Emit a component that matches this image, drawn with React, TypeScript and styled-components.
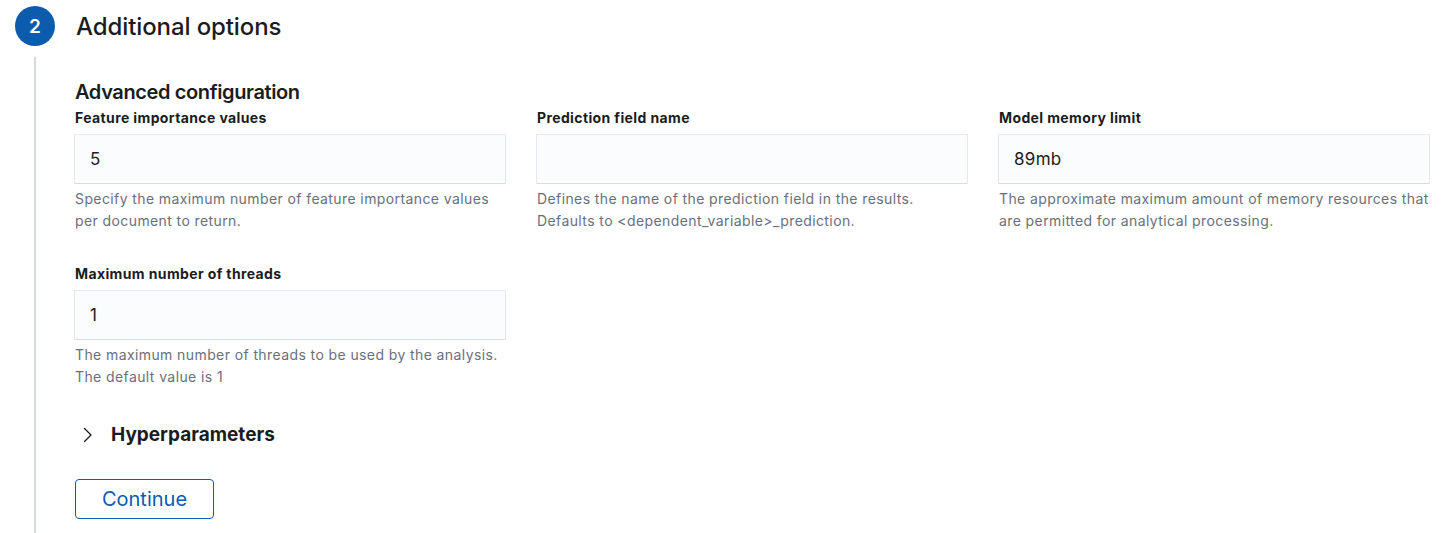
import React from "react";
import styled, { createGlobalStyle } from "styled-components";

const Global = createGlobalStyle`
  html, body { margin: 0; padding: 0; background: #ffffff; }
  body { font-family: Inter, "Noto Sans", sans-serif; color: #1a1c21; -webkit-font-smoothing: antialiased; }
`;

const Page = styled.div`
  padding: 6px 0 0 15px;
  width: 1444px;
  height: 533px;
  box-sizing: border-box;
  overflow: hidden;
`;

const StepHeader = styled.div`
  display: flex;
  align-items: center;
  gap: 21px;
  height: 40px;
`;

const StepNumber = styled.div`
  width: 40px;
  height: 40px;
  border-radius: 50%;
  background: #0b5cad;
  color: #ffffff;
  display: flex;
  align-items: center;
  justify-content: center;
  font-size: 19px;
  font-weight: 600;
`;

const StepTitle = styled.h2`
  margin: 0;
  padding-top: 2px;
  font-size: 24px;
  line-height: 40px;
  font-weight: 500;
  letter-spacing: -0.1px;
  color: #1a1c21;
`;

const StepBody = styled.div`
  margin: 11px 0 0 19px;
  border-left: 2px solid #d3dae6;
  padding: 23px 0 40px 39px;
`;

const SectionTitle = styled.h3`
  margin: 0;
  font-size: 20px;
  line-height: 24px;
  font-weight: 600;
  letter-spacing: -0.38px;
`;

const Grid = styled.div`
  display: grid;
  grid-template-columns: repeat(3, 430px);
  column-gap: 32px;
  row-gap: 33px;
  margin-top: 5px;
`;

const Field = styled.div`
  display: flex;
  flex-direction: column;
`;

const Label = styled.label`
  font-size: 14px;
  line-height: 18px;
  font-weight: 700;
  letter-spacing: 0.38px;
  color: #1a1c21;
`;

const Input = styled.input`
  margin-top: 8px;
  height: 48px;
  box-sizing: border-box;
  border: none;
  background: #fbfcfd;
  box-shadow: 0 0 0 1px rgba(17, 43, 134, 0.1), 0 1px 1px rgba(0, 0, 0, 0.06);
  border-radius: 0;
  padding: 0 15px;
  font-family: Inter, "Noto Sans", sans-serif;
  font-size: 17px;
  letter-spacing: 0.3px;
  color: #1a1c21;
  outline: none;
`;

const Help = styled.div`
  margin-top: 5px;
  font-size: 14px;
  line-height: 22px;
  letter-spacing: 0.4px;
  white-space: nowrap;
  color: #69707d;
`;

const Accordion = styled.button`
  margin-top: 35px;
  display: flex;
  align-items: center;
  gap: 18px;
  padding: 0 0 0 8px;
  background: none;
  border: none;
  font-family: Inter, "Noto Sans", sans-serif;
  font-size: 19px;
  line-height: 24px;
  font-weight: 700;
  color: #1a1c21;
  cursor: pointer;
`;

const Button = styled.button`
  margin-top: 32px;
  width: 139px;
  height: 40px;
  box-sizing: border-box;
  border: 1px solid #0b5cad;
  border-radius: 4px;
  background: #ffffff;
  color: #0b5cad;
  font-family: Inter, "Noto Sans", sans-serif;
  font-size: 20px;
  font-weight: 400;
  cursor: pointer;
  display: block;
`;

const fields = [
  {
    label: "Feature importance values",
    value: "5",
    help: ["Specify the maximum number of feature importance values", "per document to return."],
  },
  {
    label: "Prediction field name",
    value: "",
    help: ["Defines the name of the prediction field in the results.", "Defaults to <dependent_variable>_prediction."],
  },
  {
    label: "Model memory limit",
    value: "89mb",
    help: ["The approximate maximum amount of memory resources that", "are permitted for analytical processing."],
  },
  {
    label: "Maximum number of threads",
    value: "1",
    help: ["The maximum number of threads to be used by the analysis.", "The default value is 1"],
  },
];

export default function App() {
  return (
    <>
      <Global />
      <Page>
        <StepHeader>
          <StepNumber>2</StepNumber>
          <StepTitle>Additional options</StepTitle>
        </StepHeader>
        <StepBody>
          <SectionTitle>Advanced configuration</SectionTitle>
          <Grid>
            {fields.map((f) => (
              <Field key={f.label}>
                <Label>{f.label}</Label>
                <Input defaultValue={f.value} />
                <Help>
                  {f.help[0]}
                  <br />
                  {f.help[1]}
                </Help>
              </Field>
            ))}
          </Grid>
          <Accordion>
            <svg width="10" height="16" viewBox="0 0 10 16" fill="none">
              <path d="M1.5 1.5 L8 8 L1.5 14.5" stroke="#1a1c21" strokeWidth="1.3" strokeLinecap="round" strokeLinejoin="round" />
            </svg>
            Hyperparameters
          </Accordion>
          <Button>Continue</Button>
        </StepBody>
      </Page>
    </>
  );
}
